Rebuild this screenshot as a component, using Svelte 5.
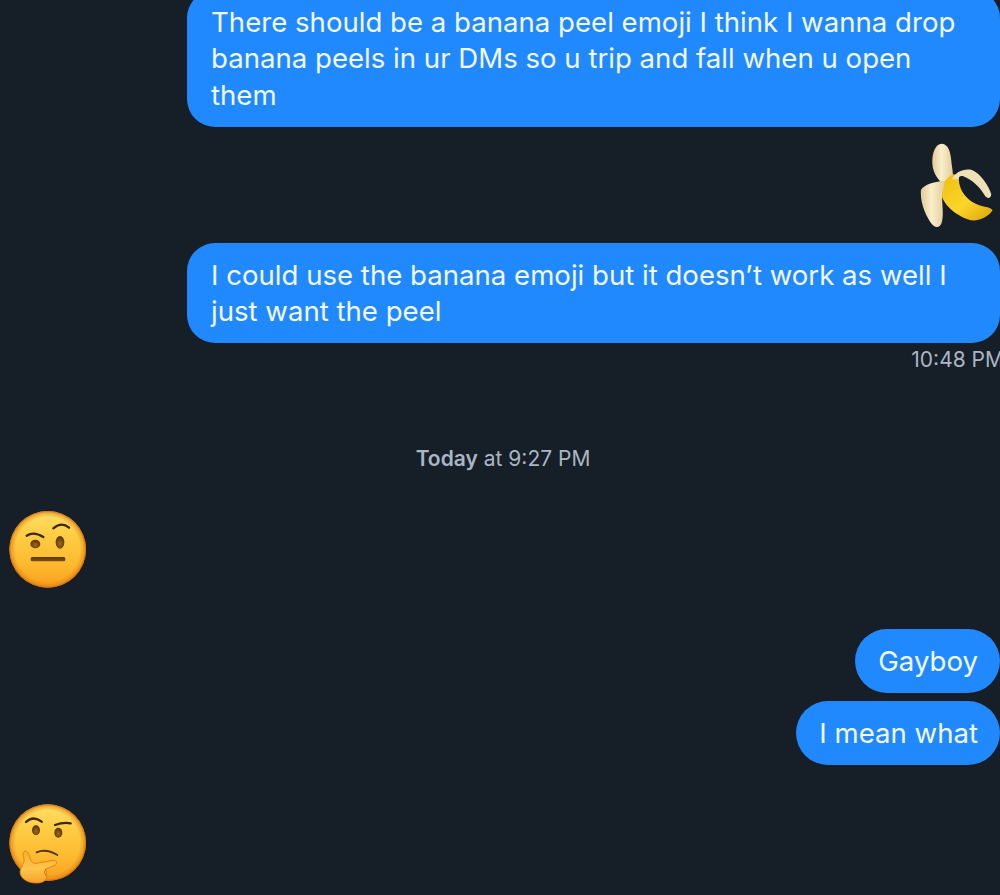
<script>
  const face = 'url(#face)';
  const rim = 'url(#rim)';
</script>

<svg class="defs" width="0" height="0" aria-hidden="true">
  <defs>
    <linearGradient id="face" x1="0" y1="0" x2="0" y2="1">
      <stop offset="0%" stop-color="#ffe068" />
      <stop offset="30%" stop-color="#fece44" />
      <stop offset="70%" stop-color="#fdb92f" />
      <stop offset="100%" stop-color="#f89f20" />
    </linearGradient>
    <radialGradient id="rim" cx="50%" cy="50%" r="50%">
      <stop offset="84%" stop-color="#e07b0e" stop-opacity="0" />
      <stop offset="95%" stop-color="#e07b0e" stop-opacity="0.5" />
      <stop offset="100%" stop-color="#c9660a" stop-opacity="1" />
    </radialGradient>
    <linearGradient id="feature" x1="0" y1="0" x2="0" y2="1">
      <stop offset="0%" stop-color="#5a3608" />
      <stop offset="100%" stop-color="#7f4e0d" />
    </linearGradient>
    <radialGradient id="eye" cx="50%" cy="60%" r="60%">
      <stop offset="0%" stop-color="#a06a0f" />
      <stop offset="100%" stop-color="#52320a" />
    </radialGradient>
    <linearGradient id="hand" x1="0" y1="0" x2="0" y2="1">
      <stop offset="0%" stop-color="#f9ab2b" />
      <stop offset="55%" stop-color="#ffc64e" />
      <stop offset="100%" stop-color="#f8a02a" />
    </linearGradient>
    <linearGradient id="peel" x1="0" y1="0" x2="1" y2="0">
      <stop offset="0%" stop-color="#e2cb97" />
      <stop offset="45%" stop-color="#f9eecb" />
      <stop offset="100%" stop-color="#e4cd99" />
    </linearGradient>
    <linearGradient id="skin" x1="0" y1="0" x2="1" y2="1">
      <stop offset="0%" stop-color="#f0bd0e" />
      <stop offset="55%" stop-color="#fbd62a" />
      <stop offset="100%" stop-color="#dca309" />
    </linearGradient>
  </defs>
</svg>

<main class="chat">
  <p class="bubble top">There should be a banana peel emoji I think I wanna drop banana peels in ur DMs so u trip and fall when u open them</p>

  <svg class="banana" viewBox="60 35 220 260" aria-label="banana">
    <path fill="url(#peel)" d="M146 172C118 158 98 130 97 98C96 68 106 40 126 40C145 41 152 66 154 92C156 115 162 132 157 152Z" />
    <path fill="url(#skin)" d="M158 132C134 148 120 166 122 186C128 222 165 256 212 270C242 273 268 256 278 240C272 231 258 231 238 225C208 214 188 194 180 168C176 154 176 144 178 134Z" />
    <path fill="#efe0b6" d="M156 148C166 124 192 114 216 119C242 130 266 165 274 192C273 205 262 207 254 195C240 171 216 148 190 138C182 135 177 138 175 146Z" />
    <path fill="url(#peel)" d="M63 178C72 164 100 154 133 152C135 168 126 182 126 200C127 228 132 258 124 280C117 294 104 292 96 282C78 258 59 216 63 178Z" />
  </svg>

  <p class="bubble">I could use the banana emoji but it doesn’t work as well I just want the peel</p>
  <div class="stamp">10:48 PM</div>

  <div class="day"><b>Today</b> at 9:27 PM</div>

  <svg class="emoji first" viewBox="0 0 300 300" aria-label="face with raised eyebrow">
    <circle cx="143" cy="133" r="115" fill={face} />
    <circle cx="143" cy="133" r="115" fill={rim} />
    <path d="M80 92Q102 78 130 96" fill="none" stroke="#3f2505" stroke-width="7" stroke-linecap="round" />
    <path d="M160 70Q185 49 207 68" fill="none" stroke="#3f2505" stroke-width="7" stroke-linecap="round" />
    <ellipse cx="106" cy="117" rx="15" ry="13" fill="url(#eye)" />
    <ellipse cx="180" cy="112" rx="13" ry="19" fill="url(#eye)" />
    <rect x="92" y="156" width="104" height="13" rx="5" fill="url(#feature)" />
  </svg>

  <p class="bubble short">Gayboy</p>
  <p class="bubble short next">I mean what</p>

  <svg class="emoji second" viewBox="0 0 300 300" aria-label="thinking face">
    <circle cx="143" cy="143" r="115" fill={face} />
    <circle cx="143" cy="143" r="115" fill={rim} />
    <path d="M78 81Q100 60 125 80" fill="none" stroke="#3f2505" stroke-width="7" stroke-linecap="round" />
    <path d="M165 90Q190 81 212 85" fill="none" stroke="#3f2505" stroke-width="7" stroke-linecap="round" />
    <ellipse cx="108" cy="106" rx="12" ry="15" fill="url(#eye)" />
    <ellipse cx="175" cy="113" rx="12" ry="15" fill="url(#eye)" />
    <path d="M110 172Q138 160 172 180" fill="none" stroke="#5a3608" stroke-width="6" stroke-linecap="round" />
    <path fill="url(#hand)" stroke="#d9800f" stroke-width="2.5" d="M72 170C80 163 86 174 90 188C93 200 98 206 108 205L160 196C170 195 174 204 166 210L137 222L141 242C140 256 128 264 112 264C92 265 70 258 62 240C56 226 68 212 72 200C74 190 66 178 72 170Z" />
    <path d="M137 222L133 232L139 243" fill="none" stroke="#c9700f" stroke-width="3" />
  </svg>
</main>

<style>
  :global(body) {
    margin: 0;
    background: #161e27;
    overflow: hidden;
  }

  .defs {
    position: absolute;
  }

  .chat {
    width: 1000px;
    height: 895px;
    overflow: hidden;
    display: flex;
    flex-direction: column;
    font-family: Inter, "Liberation Sans", sans-serif;
    color: #fff;
    background: #161e27;
  }

  .bubble {
    box-sizing: border-box;
    flex: none;
    align-self: flex-end;
    width: 813.5px;
    margin: 0;
    padding: 13.75px 22px 13.75px 24.5px;
    font-size: 27.6px;
    line-height: 36.5px;
    color: #f2f8ff;
    background: #2089fd;
    border-radius: 28px;
  }

  .top {
    margin-top: -10px;
  }

  .short {
    width: auto;
    border-radius: 32px;
    margin-top: 24px;
    padding-left: 23px;
  }

  .next {
    margin-top: 8px;
  }

  .banana {
    flex: none;
    align-self: flex-end;
    width: 73.3px;
    height: 86.7px;
    margin: 15px 6.7px 14.3px 0;
  }

  .stamp {
    flex: none;
    align-self: flex-end;
    margin: 4px -4px 0 0;
    font-size: 21px;
    line-height: 26px;
    color: #aab6c4;
    white-space: nowrap;
  }

  .day {
    flex: none;
    margin-top: 73px;
    text-align: center;
    padding-left: 6px;
    font-size: 21px;
    line-height: 26px;
    color: #aab6c4;
  }

  .day b {
    font-weight: 600;
  }

  .emoji {
    flex: none;
    width: 100px;
    height: 100px;
  }

  .first {
    margin-top: 33px;
  }

  .second {
    margin-top: 30px;
  }
</style>
